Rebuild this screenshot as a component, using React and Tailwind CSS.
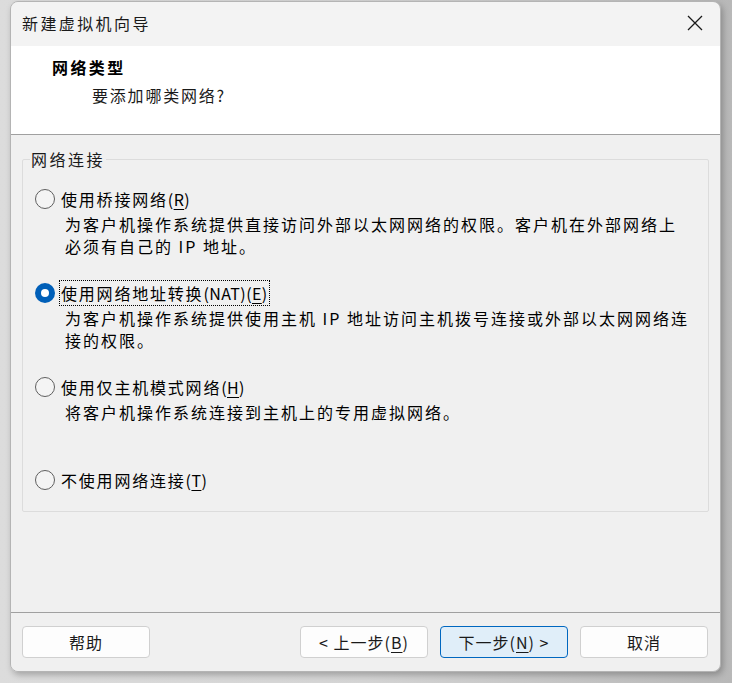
const FONT = { fontFamily: '"Noto Sans CJK SC", "Microsoft YaHei", sans-serif' };

const Radio = ({ checked }) => {
    if (checked) {
        return (
            <span className="flex h-[20px] w-[20px] shrink-0 items-center justify-center rounded-full bg-[#005fb8]">
                <span className="h-[8px] w-[8px] rounded-full bg-white"></span>
            </span>
        );
    }
    return <span className="h-[20px] w-[20px] shrink-0 rounded-full border border-[#5f5f5f] bg-[#f4f4f4]"></span>;
};

// mnemonic letter, underlined
const Mn = ({ children }) => <span className="underline underline-offset-[3px]">{children}</span>;
const Lat = ({ children }) => <span className="tracking-[0.4px]">{children}</span>;

const Option = ({ checked, label, desc, className = '' }) => (
    <div className={className}>
        <div className="flex h-[24px] items-center">
            <Radio checked={checked} />
            <span
                className={
                    'ml-[5px] flex h-[24px] items-center whitespace-nowrap px-[1px] text-[16px] tracking-[1.8px] text-black ' +
                    (checked ? 'outline-1 outline-dotted outline-black' : '')
                }
            >
                {label}
            </span>
        </div>
        {desc && (
            <div className="mt-[2px] whitespace-nowrap pl-[30px] text-[16px] leading-[22px] tracking-[2px] text-black">
                {desc.map((d, i) => (
                    <div key={i}>{d}</div>
                ))}
            </div>
        )}
    </div>
);

const Btn = ({ children, primary }) => (
    <button
        className={
            'flex h-[32px] w-[128px] items-center justify-center rounded-[4px] border text-[16px] tracking-[1px] text-[#1a1a1a] ' +
            (primary ? 'border-[#0067c0] bg-[#e0eef9]' : 'border-[#d0d0d0] bg-[#fdfdfd]')
        }
    >
        {children}
    </button>
);

export default function App() {
    return (
        <div className="h-[683px] w-[732px] bg-gradient-to-r from-[#dcdcdc] via-[#d4d4d4] to-[#b8b8b8] pl-[10px] pt-[1px]" style={FONT}>
            <div className="flex h-[671px] w-[711px] flex-col overflow-hidden rounded-[8px] border border-[#b4b4b4] shadow-[2px_3px_6px_rgba(0,0,0,0.25)]">
                {/* title bar */}
                <div className="flex h-[44px] shrink-0 items-center justify-between bg-[#f3f3f3] pb-[3px] pl-[11px] pr-[17px]">
                    <span className="text-[16px] tracking-[2.4px] text-[#1a1a1a]">新建虚拟机向导</span>
                    <svg width="16" height="16" viewBox="0 0 16 16" fill="none" stroke="#1a1a1a" strokeWidth="1.3">
                        <path d="M1 1 L15 15 M15 1 L1 15" />
                    </svg>
                </div>

                {/* header */}
                <div className="h-[89px] shrink-0 border-b border-[#a0a0a0] bg-white pl-[41px] pt-[9px]">
                    <div className="text-[16px] font-bold leading-[24px] tracking-[2.4px] text-black">网络类型</div>
                    <div className="ml-[40px] mt-[4px] text-[16px] leading-[24px] tracking-[1.8px] text-[#1a1a1a]">要添加哪类网络?</div>
                </div>

                {/* body */}
                <div className="flex-1 bg-[#f0f0f0] px-[11px] pt-[13px]">
                    <fieldset className="h-[364px] rounded-[2px] border border-[#dcdcdc] px-[7px]">
                        <legend className="px-[1px] text-[16px] leading-[22px] tracking-[2.5px] text-[#1a1a1a]">网络连接</legend>
                        <div className="pl-[5px] pt-[17px]">
                            <Option
                                label={<>使用桥接网络<Lat>(<Mn>R</Mn>)</Lat></>}
                                desc={['为客户机操作系统提供直接访问外部以太网网络的权限。客户机在外部网络上', '必须有自己的 IP 地址。']}
                            />
                            <Option
                                className="mt-[24px]"
                                checked
                                label={<>使用网络地址转换<Lat>(NAT)(<Mn>E</Mn>)</Lat></>}
                                desc={['为客户机操作系统提供使用主机 IP 地址访问主机拨号连接或外部以太网网络连', '接的权限。']}
                            />
                            <Option
                                className="mt-[24px]"
                                label={<>使用仅主机模式网络<Lat>(<Mn>H</Mn>)</Lat></>}
                                desc={['将客户机操作系统连接到主机上的专用虚拟网络。']}
                            />
                            <Option className="mt-[45px]" label={<>不使用网络连接<Lat>(<Mn>T</Mn>)</Lat></>} />
                        </div>
                    </fieldset>
                </div>

                {/* footer */}
                <div className="flex h-[59px] shrink-0 items-center border-t border-[#a0a0a0] bg-[#f0f0f0] pl-[11px] pr-[12px]">
                    <Btn>帮助</Btn>
                    <div className="ml-auto flex gap-[12px]">
                        <Btn>
                            &lt; 上一步(<Mn>B</Mn>)
                        </Btn>
                        <Btn primary>
                            下一步(<Mn>N</Mn>) &gt;
                        </Btn>
                    </div>
                    <div className="ml-[12px]">
                        <Btn>取消</Btn>
                    </div>
                </div>
            </div>
        </div>
    );
}
